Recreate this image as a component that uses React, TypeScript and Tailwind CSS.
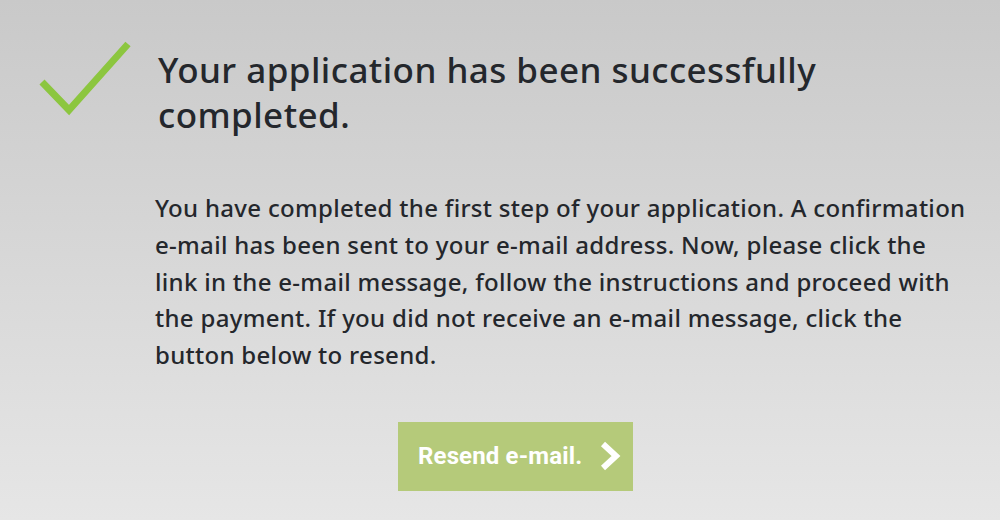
import React from "react";

export default function App() {
  return (
    <div
      className="w-[1000px] h-[520px] overflow-hidden bg-gradient-to-b from-[#c9c9c9] to-[#e6e6e6] text-[#24272c]"
      style={{ fontFamily: '"Noto Sans", sans-serif' }}
    >
      <div className="flex items-start pt-[40px] pl-[36px]">
        <svg width="100" height="80" viewBox="0 0 100 80" className="shrink-0">
          <polyline points="6,42 33,70 92,4" fill="none" stroke="#8cc63f" strokeWidth="7" />
        </svg>
        <h1 className="ml-[22px] mt-[7px] text-[35px] leading-[45px] font-medium tracking-[0.45px] w-[760px]">
          Your application has been successfully
          <br />
          completed.
        </h1>
      </div>
      <p className="ml-[155px] mt-[53px] w-[845px] text-[24px] leading-[36.8px] font-medium tracking-[0.3px]">
        You have completed the first step of your application. A confirmation
        <br />
        e‑mail has been sent to your e‑mail address. Now, please click the
        <br />
        link in the e‑mail message, follow the instructions and proceed with
        <br />
        the payment. If you did not receive an e‑mail message, click the
        <br />
        button below to resend.
      </p>
      <div className="flex justify-center mt-[48px] pl-[31px]">
        <button
          className="w-[235px] h-[69px] bg-[#b5ca7a] text-white text-[24px] font-bold tracking-[0.15px] flex items-center pl-[20px] gap-[17px]"
          style={{ fontFamily: '"Roboto", sans-serif' }}
        >
          <span>Resend e-mail.</span>
          <svg width="22" height="30" viewBox="0 0 22 30">
            <polyline points="4,3 17,15 4,27" fill="none" stroke="white" strokeWidth="6" />
          </svg>
        </button>
      </div>
    </div>
  );
}
